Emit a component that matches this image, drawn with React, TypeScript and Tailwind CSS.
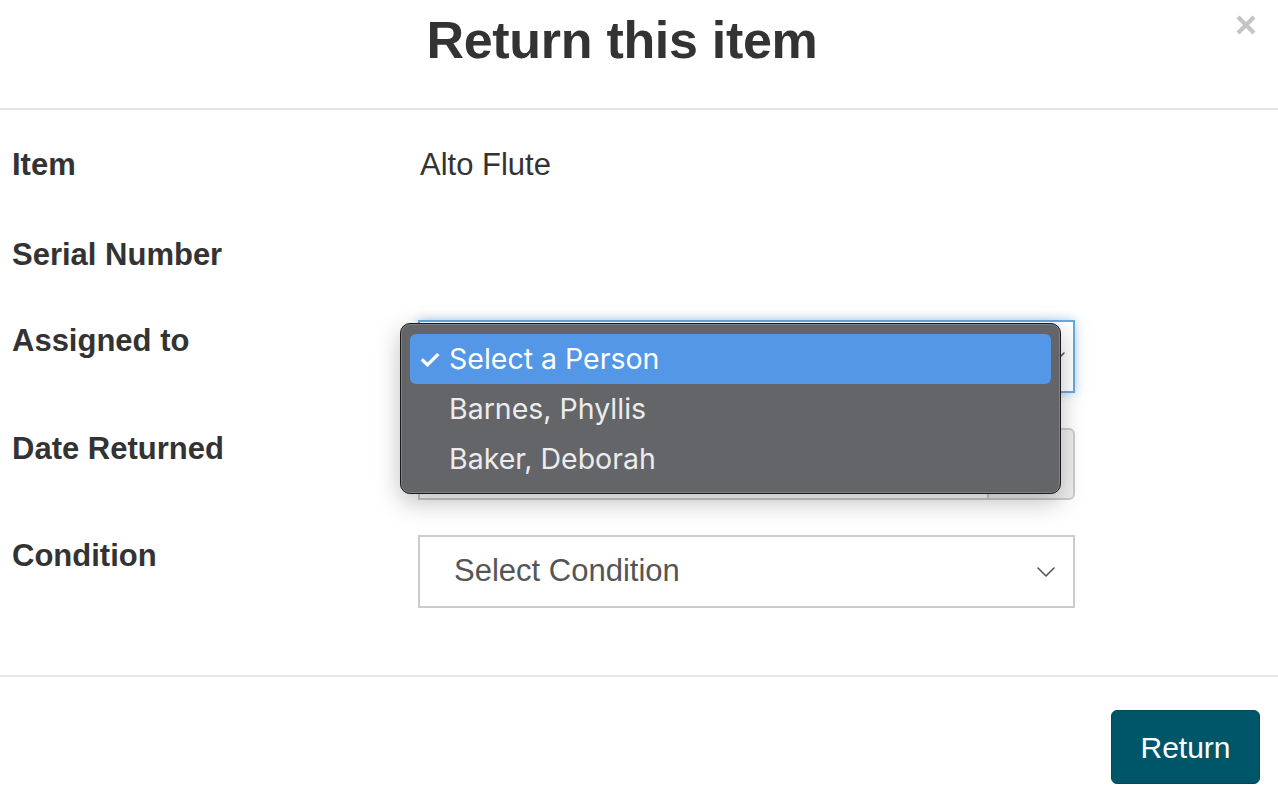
import React from "react";

const font = { fontFamily: '"Liberation Sans", Arial, Helvetica, sans-serif' };

function Chevron({ className }: { className?: string }) {
  return (
    <svg className={className} width="18" height="10" viewBox="0 0 18 10" fill="none">
      <path d="M1 1 L9 9 L17 1" stroke="#555" strokeWidth="1.6" strokeLinecap="round" strokeLinejoin="round" />
    </svg>
  );
}

export default function App() {
  return (
    <div style={font} className="relative w-[1278px] h-[800px] bg-white text-[#333] overflow-hidden">
      {/* Header */}
      <div className="relative h-[110px] border-b-2 border-[#e5e5e5] flex items-start justify-center pr-[34px]">
        <h1 className="mt-[10px] text-[52px] leading-[60px] font-bold text-[#333] tracking-[-0.3px]">Return this item</h1>
        <button className="absolute right-[20px] top-[13px] w-[24px] h-[24px] flex items-center justify-center">
          <svg width="22" height="22" viewBox="0 0 22 22">
            <path d="M3 3 L19 19 M19 3 L3 19" stroke="#c4c4c4" strokeWidth="4.2" strokeLinecap="butt" />
          </svg>
        </button>
      </div>

      {/* Body */}
      <div className="h-[567px] pt-[36px] border-b-2 border-[#e5e5e5]">
        <div className="flex h-[88px]">
          <div className="w-[418px] pl-[12px] text-[31px] leading-[38px] font-bold">Item</div>
          <div className="pl-[2px] text-[31px] leading-[38px]">Alto Flute</div>
        </div>
        <div className="flex h-[86px]">
          <div className="w-[418px] pl-[12px] pt-[2px] text-[31px] leading-[38px] font-bold">Serial Number</div>
          <div />
        </div>
        <div className="flex h-[108px]">
          <div className="w-[418px] pl-[12px] pt-[2px] text-[31px] leading-[38px] font-bold">Assigned to</div>
          <div className="w-[657px] h-[73px] border-2 border-[#66a8e2] shadow-[0_0_10px_rgba(102,168,226,0.55)] bg-white flex items-center justify-end pr-[8px]">
            <Chevron />
          </div>
        </div>
        <div className="flex h-[107px]">
          <div className="w-[418px] pl-[12px] pt-[2px] text-[31px] leading-[38px] font-bold">Date Returned</div>
          <div className="w-[657px] h-[72px] flex">
            <div className="flex-1 border-2 border-r-0 border-[#cccccc] bg-white" />
            <div className="w-[88px] border-2 border-[#cccccc] rounded-r-[6px] bg-[#eeeeee]" />
          </div>
        </div>
        <div className="flex">
          <div className="w-[418px] pl-[12px] pt-[2px] text-[31px] leading-[38px] font-bold">Condition</div>
          <div className="w-[657px] h-[73px] border-2 border-[#cccccc] bg-white flex items-center pl-[34px] pr-[18px]">
            <span className="flex-1 text-[31px] text-[#555]">Select Condition</span>
            <Chevron />
          </div>
        </div>
      </div>

      {/* Footer */}
      <div className="flex justify-end pt-[33px] pr-[18px]">
        <button className="w-[149px] h-[74px] rounded-[6px] bg-[#005669] border border-[#00495a] text-white text-[30px] flex items-center justify-center">
          Return
        </button>
      </div>

      {/* Native popup menu overlay */}
      <div
        style={{ fontFamily: 'Inter, "Noto Sans", sans-serif' }}
        className="absolute left-[400px] top-[323px] w-[661px] h-[171px] rounded-[10px] bg-[#636568] border border-[#1c1c1c] shadow-[inset_0_0_0_1px_rgba(255,255,255,0.18),0_8px_24px_rgba(0,0,0,0.25)] px-[9px] pt-[10px]"
      >
        <div className="h-[50px] rounded-[6px] bg-[#5597e7] flex items-center text-white text-[28.5px]">
          <span className="w-[39px] pl-[8px] text-[26px] font-semibold">✓</span>
          <span>Select a Person</span>
        </div>
        <div className="h-[50px] flex items-center text-[#ececec] text-[28.5px] pl-[39px]">Barnes, Phyllis</div>
        <div className="h-[50px] flex items-center text-[#ececec] text-[28.5px] pl-[39px]">Baker, Deborah</div>
      </div>
    </div>
  );
}
